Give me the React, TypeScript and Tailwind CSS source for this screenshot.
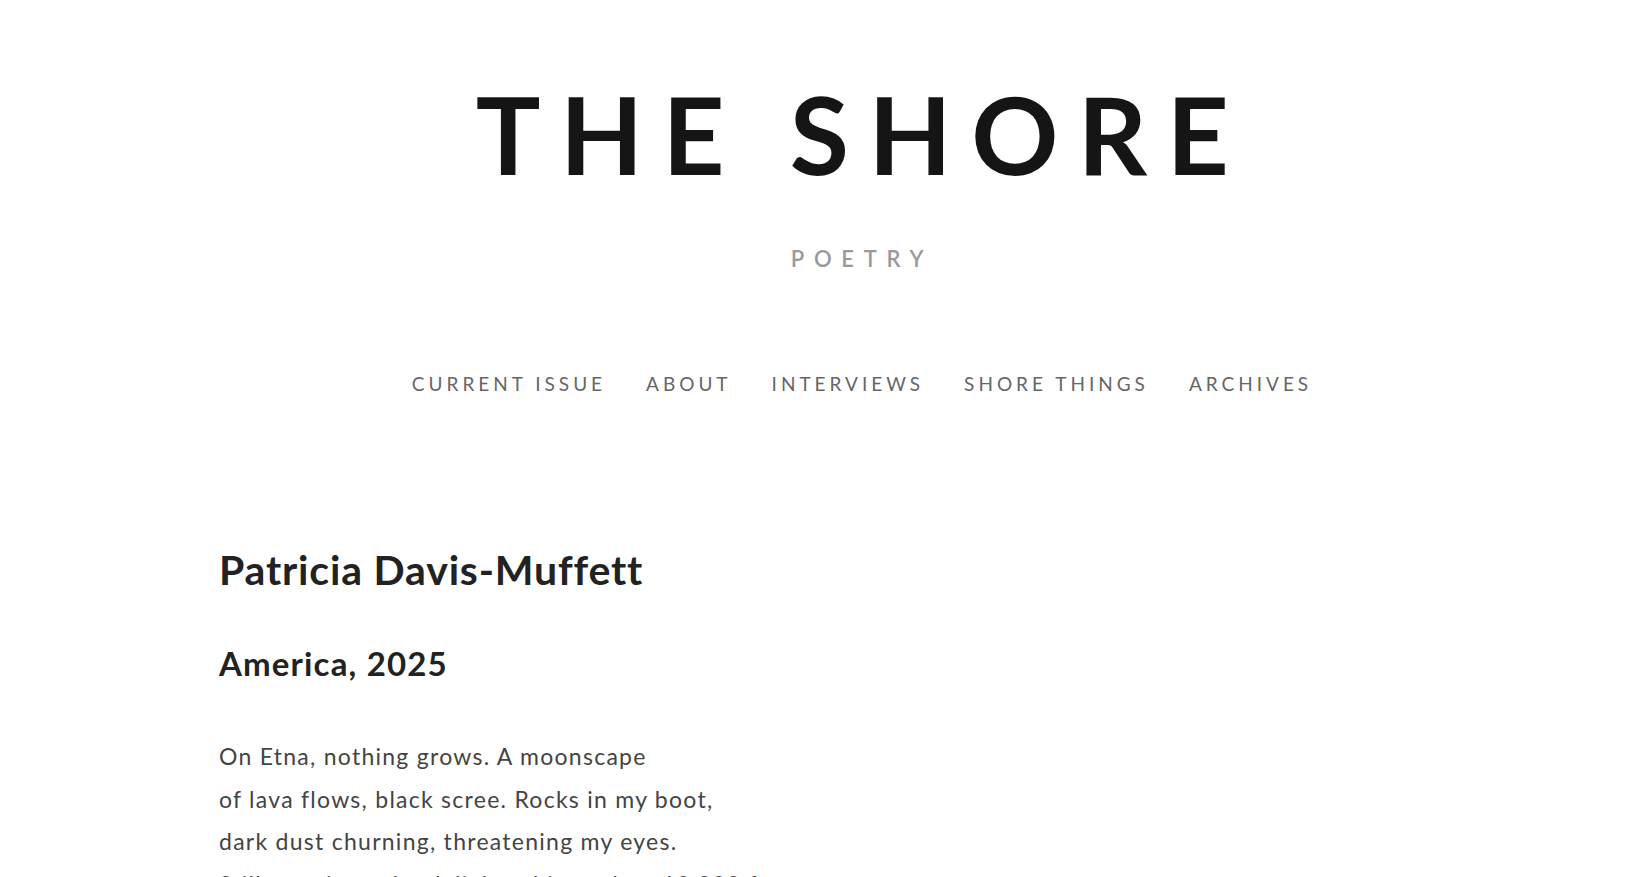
import React from 'react';

const navItems = ['Current Issue', 'About', 'Interviews', 'Shore Things', 'Archives'];

const poemLines = [
  'On Etna, nothing grows. A moonscape',
  'of lava flows, black scree. Rocks in my boot,',
  'dark dust churning, threatening my eyes.',
  'Still, we sip at the delights this peak at 10,000 feet',
];

const App: React.FC = () => {
  return (
    <div className="min-h-screen bg-white pl-[219px] pr-[144px] font-['Lato','Liberation_Sans',sans-serif]">
      {/* Masthead */}
      <header className="flex flex-col items-center pt-[69px]">
        <h1 className="text-[108px] font-bold leading-[128px] tracking-[0.18em] text-[#151515]">
          THE SHORE
        </h1>
        <div className="mt-[51px] text-[22px] font-semibold leading-none tracking-[0.44em] text-[#9a9a9a]">
          POETRY
        </div>
        <nav className="mt-[104px] flex gap-[40px]">
          {navItems.map((item) => (
            <a
              key={item}
              href="#"
              className="text-[19px] uppercase leading-none tracking-[0.21em] text-[#666]"
            >
              {item}
            </a>
          ))}
        </nav>
      </header>

      {/* Article */}
      <main className="mt-[156px]">
        <h2 className="text-[41px] font-bold leading-none tracking-[0.02em] text-[#222]">
          Patricia Davis-Muffett
        </h2>
        <h3 className="mt-[57px] text-[33px] font-bold leading-none tracking-[0.035em] text-[#222]">
          America, 2025
        </h3>
        <div className="mt-[55px] text-[23px] leading-[42.5px] tracking-[0.055em] text-[#444]">
          {poemLines.map((line) => (
            <p key={line}>{line}</p>
          ))}
        </div>
      </main>
    </div>
  );
};

export default App;
